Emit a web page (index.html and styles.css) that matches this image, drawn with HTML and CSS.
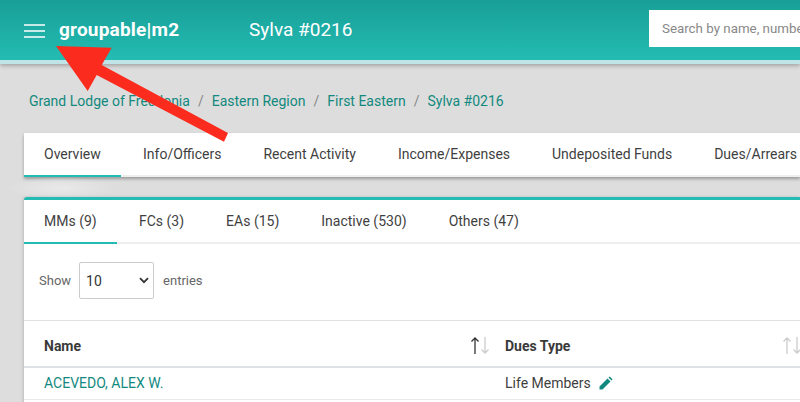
FILE: index.html
```html
<!DOCTYPE html>
<html lang="en">
<head>
<meta charset="utf-8">
<title>Sylva #0216</title>
<link rel="stylesheet" href="styles.css">
</head>
<body>
<header class="topbar">
  <div class="topbar-main">
    <svg class="menu-icon" width="21" height="14" viewBox="0 0 21 14"><path d="M0 1h21M0 7h21M0 13h21" stroke="#fff" stroke-width="1.700" fill="none"/></svg>
    <span class="brand">groupable|m2</span>
    <span class="lodge">Sylva #0216</span>
    <input class="search" type="text" placeholder="Search by name, number, or email">
  </div>
</header>
<main class="content">
  <nav class="crumbs">
    <a>Grand Lodge of Freedonia</a><i>/</i><a>Eastern Region</a><i>/</i><a>First Eastern</a><i>/</i><a>Sylva #0216</a>
  </nav>
  <div class="tabs-card">
    <span class="tab tab-on">Overview</span>
    <span class="tab">Info/Officers</span>
    <span class="tab">Recent Activity</span>
    <span class="tab">Income/Expenses</span>
    <span class="tab">Undeposited Funds</span>
    <span class="tab">Dues/Arrears</span>
  </div>
  <div class="glow"></div>
  <section class="panel">
    <div class="subtabs">
      <span class="subtab subtab-on">MMs (9)</span>
      <span class="subtab">FCs (3)</span>
      <span class="subtab">EAs (15)</span>
      <span class="subtab">Inactive (530)</span>
      <span class="subtab">Others (47)</span>
    </div>
    <div class="length">
      <span>Show</span>
      <div class="select"><span>10</span><svg width="10" height="7" viewBox="0 0 10 7"><path d="M1 1.200l4 4 4-4" stroke="#333" stroke-width="1.800" fill="none"/></svg></div>
      <span>entries</span>
    </div>
    <div class="row head">
      <div class="col-name"><span>Name</span>
        <svg class="sort" width="22" height="20" viewBox="0 0 22 20"><path d="M6 19V3M2.500 6.500L6 3l3.500 3.500" stroke="#333" stroke-width="1.300" fill="none"/><path d="M16 2v16M12.500 14.500L16 18l3.500-3.500" stroke="#ccc" stroke-width="1.300" fill="none"/></svg>
      </div>
      <div class="col-dues"><span>Dues Type</span>
        <svg class="sort" width="19" height="20" viewBox="0 0 19 20"><path d="M6 19V3M2.500 6.500L6 3l3.500 3.500" stroke="#ccc" stroke-width="1.300" fill="none"/><path d="M16 2v16M12.500 14.500L16 18l3.500-3.500" stroke="#ccc" stroke-width="1.300" fill="none"/></svg>
      </div>
    </div>
    <div class="row body">
      <div class="col-name"><a>ACEVEDO, ALEX W.</a></div>
      <div class="col-dues"><span>Life Members</span>
        <svg class="pencil" width="14" height="14" viewBox="0 0 14 14"><path d="M0.500 13.500V10.500L8.500 2.500L11.500 5.500L3.500 13.500ZM9.500 1.500L10.700 0.500L13.500 3.300L12.500 4.500Z" fill="#12897e"/></svg>
      </div>
    </div>
  </section>
</main>
<svg class="arrow" width="240" height="150" viewBox="0 0 240 150"><path d="M56 46L111.700 47.700L101.700 65L228 133L224 141.700L96.700 75L87.700 91Z" fill="#fb2c1e"/></svg>
</body>
</html>
```
FILE: styles.css
```css
* { box-sizing: border-box; }
html, body { margin: 0; height: 402px; overflow: hidden; }
body { position: relative; background: #dddddd; font-family: Roboto, "Liberation Sans", sans-serif; color: #3f3f3f; }
.topbar { height: 64px; border-bottom: 4px solid #c0e5e8; box-shadow: 0 2px 4px rgba(0,0,0,.25); }
.topbar-main { height: 60px; display: flex; align-items: center; background: linear-gradient(#189f97, #23bcb3); padding: 0 0 0 24px; }
.menu-icon { flex: none; margin-top: 2px; }
.brand { flex: none; color: #fff; font-weight: 700; font-size: 19px; letter-spacing: .2px; margin-left: 14px; width: 190px; margin-bottom: 2px; }
.lodge { flex: none; color: #fff; font-size: 19px; width: 400px; margin-bottom: 2px; }
.search { flex: none; width: 151px; height: 37px; margin: 0 0 3px; background: #fff; border: 0; outline: 0; font-family: Roboto, "Liberation Sans", sans-serif; font-size: 13.330px; padding: 0 0 0 13px; }
.search::placeholder { color: #888; opacity: 1; }
.content { padding: 0 0 0 24px; position: relative; }
.crumbs { height: 69px; display: flex; align-items: center; padding: 4px 0 0 5px; font-size: 14px; color: #12897e; }
.crumbs i { font-style: normal; color: #888; margin: 0 8px; }
.tabs-card { display: flex; height: 44px; background: #fff; box-shadow: inset 0 -2px 0 #eeeeee, 0 2px 3px rgba(0,0,0,.3); white-space: nowrap; font-size: 14px; overflow: hidden; }
.tab { flex: none; padding: 0 21px 0 20px; line-height: 42px; height: 44px; margin-right: 1px; }
.tab-on { border-bottom: 2px solid #23bcb3; width: 97px; margin-right: 2px; padding-right: 0; }
.glow { position: absolute; left: 6px; top: 113px; width: 110px; height: 22px; background: radial-gradient(closest-side, #e9e9e9, rgba(233,233,233,0)); }
.panel { position: relative; margin-top: 20px; height: 220px; background: #fff; border-top: 3px solid #23bcb3; border-radius: 3px 0 0 0; font-size: 14px; box-shadow: -1px 0 3px rgba(0,0,0,.15); }
.subtabs { display: flex; height: 44px; border-bottom: 2px solid #eeeeee; }
.subtab { flex: none; padding: 0 21px; line-height: 42px; height: 44px; white-space: nowrap; }
.subtab-on { border-bottom: 2px solid #23bcb3; width: 93px; padding: 0 0 0 20px; margin-right: 1px; }
.length { height: 77px; padding-left: 15px; display: flex; align-items: center; gap: 8px; font-size: 13px; color: #666; border-bottom: 1px solid #e2e2e2; padding-bottom: 3px; }
.select { width: 75px; height: 37px; border: 1px solid #ccc; border-radius: 2px; display: flex; justify-content: space-between; align-items: center; padding: 0 4px 0 6px; color: #333; font-size: 14px; margin-right: 1px; }
.row { display: flex; padding-left: 20px; }
.head { height: 47px; align-items: center; font-weight: 700; border-bottom: 2px solid #dee2e6; color: #3a3a3a; padding-top: 4px; }
.body { height: 32px; align-items: center; border-bottom: 1px solid #e6e8ec; padding-bottom: 2px; }
.col-name { flex: none; width: 461px; display: flex; justify-content: space-between; align-items: center; padding-right: 14px; }
.col-name a { color: #12897e; font-size: 14px; }
.col-dues { flex: 1; display: flex; justify-content: space-between; align-items: center; }
.head .sort { flex: none; margin: -2px 0 0; }
.body .col-dues { justify-content: flex-start; gap: 8px; }
.arrow { position: absolute; left: 0; top: 0; }
```
